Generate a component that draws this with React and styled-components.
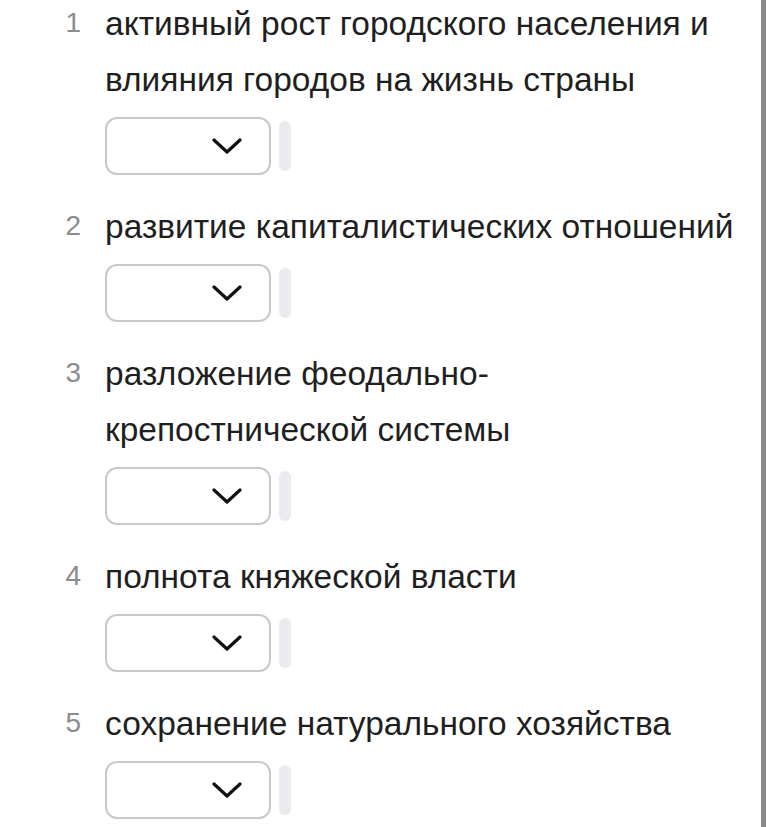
import styled, { createGlobalStyle } from "styled-components";

const GlobalStyle = createGlobalStyle`
  body {
    margin: 0;
    background: #ffffff;
    font-family: "Liberation Sans", Arial, sans-serif;
  }
`;

const items = [
  "активный рост городского населения и влияния городов на жизнь страны",
  "развитие капиталистических отношений",
  "разложение феодально-крепостнической системы",
  "полнота княжеской власти",
  "сохранение натурального хозяйства",
];

const Page = styled.div`
  width: 761px;
  min-height: 100vh;
  border-right: 5px solid #8a8a8a;
  box-sizing: content-box;
  overflow: hidden;
`;

const List = styled.ol`
  list-style: none;
  margin: -4px 0 0;
  padding: 0 16px 0 0;
  display: flex;
  flex-direction: column;
  gap: 24px;
`;

const Item = styled.li`
  display: grid;
  grid-template-columns: 81px 1fr;
  column-gap: 24px;
  align-items: start;
`;

const Num = styled.span`
  text-align: right;
  font-size: 28px;
  line-height: 54px;
  color: #8c8c8c;
`;

const Body = styled.div`
  display: flex;
  flex-direction: column;
  gap: 9px;
`;

const Text = styled.p`
  margin: 0;
  font-size: 33.5px;
  line-height: 56px;
  color: #1f1f1f;
`;

const SelectRow = styled.div`
  display: flex;
  align-items: center;
  gap: 8px;
`;

const Select = styled.div`
  width: 166px;
  height: 58px;
  box-sizing: border-box;
  border: 2px solid #c9c9c9;
  border-radius: 12px;
  display: flex;
  align-items: center;
  justify-content: flex-end;
  padding-right: 27px;
`;

const Bar = styled.div`
  width: 12px;
  height: 50px;
  border-radius: 6px;
  background: #e9ebee;
`;

const Chevron = () => (
  <svg width="30" height="18" viewBox="0 0 30 18">
    <path d="M2 3 L15 15 L28 3" fill="none" stroke="#111" strokeWidth="3.2" strokeLinecap="round" strokeLinejoin="round" />
  </svg>
);

export default function App() {
  return (
    <>
      <GlobalStyle />
      <Page>
        <List>
          {items.map((t, i) => (
            <Item key={i}>
              <Num>{i + 1}</Num>
              <Body>
                <Text>{t}</Text>
                <SelectRow>
                  <Select>
                    <Chevron />
                  </Select>
                  <Bar />
                </SelectRow>
              </Body>
            </Item>
          ))}
        </List>
      </Page>
    </>
  );
}
